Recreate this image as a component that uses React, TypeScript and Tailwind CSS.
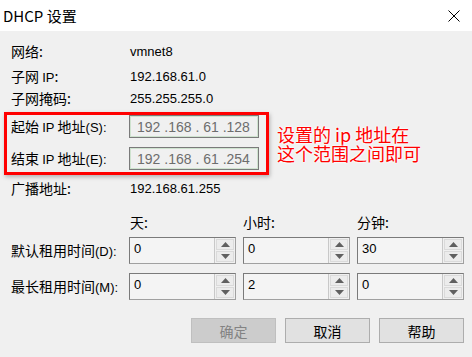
import React from "react";

const cjk = "font-['Noto_Sans_CJK_SC','Noto_Sans',sans-serif]";
const lat = "font-['Liberation_Sans','Noto_Sans_CJK_SC',sans-serif]";

function Row({ label, value }: { label: React.ReactNode; value: string }) {
  return (
    <div className="flex h-[22px] items-center pl-[11px]">
      <div className={`w-[119px] text-[14px] leading-none text-black ${cjk}`}>{label}</div>
      <div className={`text-[13px] leading-none text-black ${lat}`}>{value}</div>
    </div>
  );
}

function IpBox({ parts }: { parts: string[] }) {
  return (
    <div className="flex h-[23px] w-[130px] items-center border border-[#7a7a7a] bg-[#f0f0f0] p-0">
      <div className="flex h-full w-full items-center border border-[#cfe3cf] pl-[6px]">
        <span className={`whitespace-pre text-[14px] leading-none text-[#6d6d6d] ${lat}`}>
          {`${parts[0]} .${parts[1]} . ${parts[2]} .${parts[3]}`}
        </span>
      </div>
    </div>
  );
}

function Tri({ up }: { up: boolean }) {
  return (
    <svg width="9" height="5" viewBox="0 0 9 5">
      {up ? <polygon points="4.5,0 9,5 0,5" fill="#606060" /> : <polygon points="0,0 9,0 4.5,5" fill="#606060" />}
    </svg>
  );
}

function Spin({ value }: { value: string }) {
  return (
    <div className="flex h-[27px] w-[107px] border border-[#a0a0a0] border-t-[#7a7a7a] border-l-[#7a7a7a] bg-[#f4f4f4]">
      <div className={`flex-1 pl-[4px] pt-[4px] text-[13px] leading-none text-black ${lat}`}>{value}</div>
      <div className="flex w-[21px] flex-col gap-[1px] border-l border-[#c8c8c8] bg-[#f0f0f0] p-[1px]">
        <div className="flex flex-1 items-center justify-center border border-[#dadada] bg-[#ececec]">
          <Tri up />
        </div>
        <div className="flex flex-1 items-center justify-center border border-[#dadada] bg-[#ececec]">
          <Tri up={false} />
        </div>
      </div>
    </div>
  );
}

function Btn({ children, disabled }: { children: React.ReactNode; disabled?: boolean }) {
  return (
    <div
      className={`flex h-[25px] w-[85px] items-center justify-center border text-[14px] leading-none ${cjk} ${
        disabled ? "border-[#bfbfbf] bg-[#cccccc] text-[#838383]" : "border-[#adadad] bg-[#e1e1e1] text-black"
      }`}
    >
      {children}
    </div>
  );
}

function L({ children }: { children: React.ReactNode }) {
  return <span className={`text-[13px] ${lat}`}>{children}</span>;
}

export default function App() {
  return (
    <div className="flex h-[357px] w-[472px] flex-col overflow-hidden bg-[#f0f0f0]">
      <div className="flex h-[31px] items-center justify-between bg-white pl-[3px] pr-[12px]">
        <span className={`text-[15px] leading-none text-black ${cjk}`}>DHCP 设置</span>
        <svg width="12" height="12" viewBox="0 0 12 12">
          <path d="M0.5 0.5 L11.5 11.5 M11.5 0.5 L0.5 11.5" stroke="#000" strokeWidth="1" />
        </svg>
      </div>
      <div className="flex flex-1 flex-col pt-[9px]">
        <Row label="网络:" value="vmnet8" />
        <div className="mt-[3px]">
          <Row label={<>子网 <L>IP</L>:</>} value="192.168.61.0" />
        </div>
        <Row label="子网掩码:" value="255.255.255.0" />

        <div className="mt-[3px] flex items-center">
          <div className="ml-[4px] flex w-[265px] flex-col gap-[9px] border-[3px] border-[#ff0000] pb-[2px] pl-[4px] shadow-[1px_2px_4px_rgba(0,0,0,0.25)]">
            <div className="flex items-center">
              <div className={`w-[118px] text-[14px] leading-none text-black ${cjk}`}>
                起始 <L>IP</L> 地址<L>(S):</L>
              </div>
              <IpBox parts={["192", "168", "61", "128"]} />
            </div>
            <div className="flex items-center">
              <div className={`w-[118px] text-[14px] leading-none text-black ${cjk}`}>
                结束 <L>IP</L> 地址<L>(E):</L>
              </div>
              <IpBox parts={["192", "168", "61", "254"]} />
            </div>
          </div>
          <div
            className={`ml-[8px] flex flex-col text-[18px] leading-[19px] text-[#ff0000] ${cjk} [text-shadow:0_0_2px_#fff,0_0_2px_#fff,0_0_3px_#fff]`}
          >
            <div className="h-[19px]">设置的 ip 地址在</div>
            <div className="h-[19px]">这个范围之间即可</div>
          </div>
        </div>

        <div className="mt-[2px]">
          <Row label="广播地址:" value="192.168.61.255" />
        </div>

        <div className={`mt-[14px] flex h-[18px] items-center text-[14px] leading-none text-black ${cjk}`}>
          <div className="ml-[130px] w-[113px]">天:</div>
          <div className="w-[114px]">小时:</div>
          <div>分钟:</div>
        </div>

        <div className="mt-[6px] flex flex-col gap-[9px]">
          <div className="flex items-center pl-[11px]">
            <div className={`w-[118px] text-[14px] leading-none text-black ${cjk}`}>默认租用时间<L>(D):</L></div>
            <div className="flex gap-[7px]">
              <Spin value="0" />
              <Spin value="0" />
              <Spin value="30" />
            </div>
          </div>
          <div className="flex items-center pl-[11px]">
            <div className={`w-[118px] text-[14px] leading-none text-black ${cjk}`}>最长租用时间<L>(M):</L></div>
            <div className="flex gap-[7px]">
              <Spin value="0" />
              <Spin value="2" />
              <Spin value="0" />
            </div>
          </div>
        </div>

        <div className="mt-[18px] flex justify-end gap-[9px] pr-[8px]">
          <Btn disabled>确定</Btn>
          <Btn>取消</Btn>
          <Btn>帮助</Btn>
        </div>
      </div>
    </div>
  );
}
